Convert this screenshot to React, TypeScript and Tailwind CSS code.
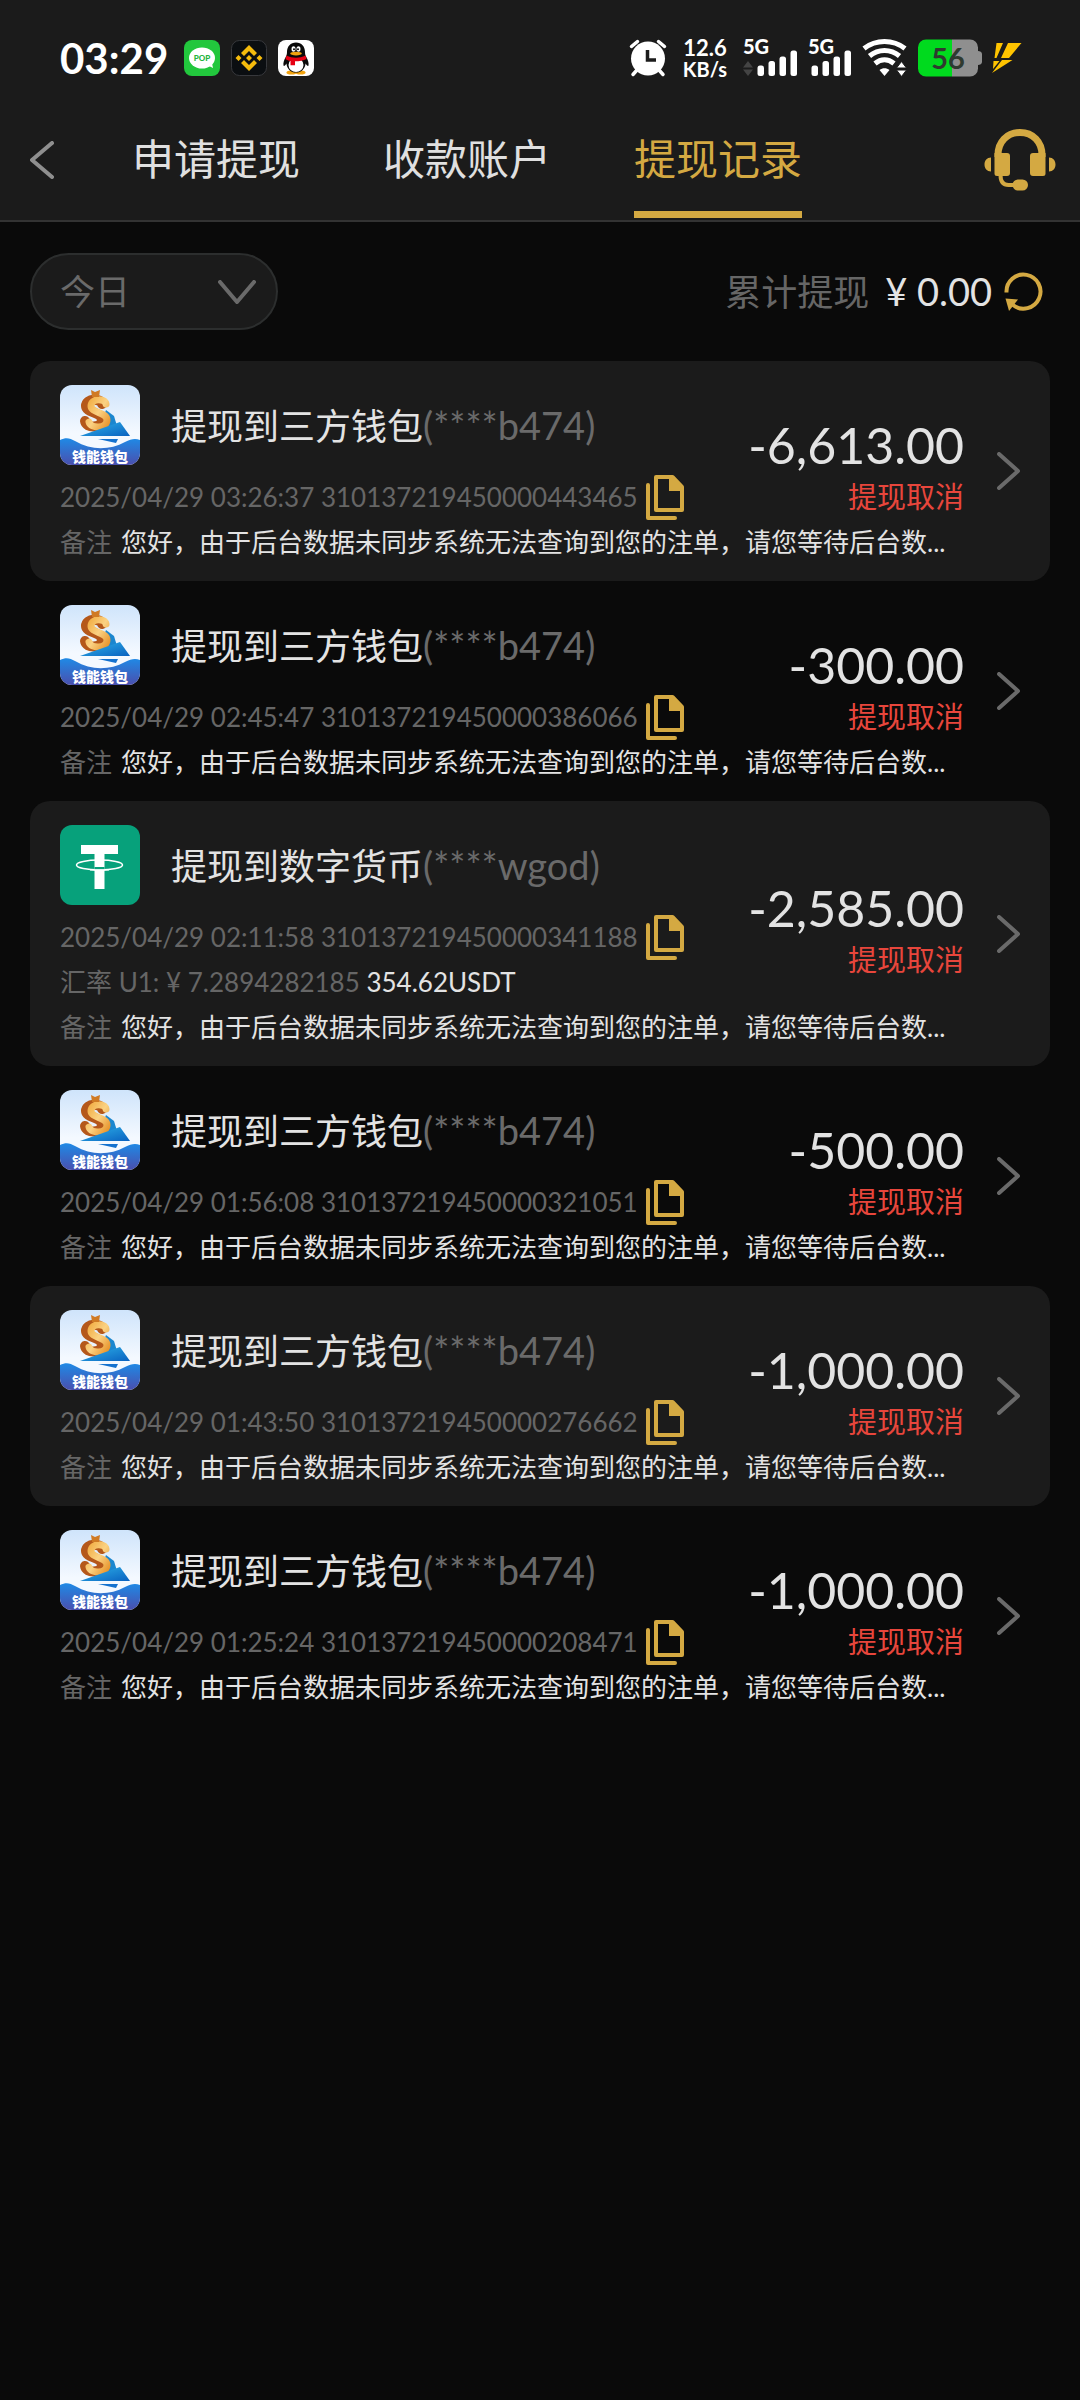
import { ReactNode } from "react";

interface WithdrawRecord {
  kind: "wallet" | "usdt";
  title: string;
  account: string;
  time: string;
  orderNo: string;
  rate?: string;
  received?: string;
  amount: string;
}

const remark =
  "您好，由于后台数据未同步系统无法查询到您的注单，请您等待后台数...";

const records: WithdrawRecord[] = [
  {
    kind: "wallet",
    title: "提现到三方钱包",
    account: "(****b474)",
    time: "2025/04/29 03:26:37",
    orderNo: "310137219450000443465",
    amount: "-6,613.00",
  },
  {
    kind: "wallet",
    title: "提现到三方钱包",
    account: "(****b474)",
    time: "2025/04/29 02:45:47",
    orderNo: "310137219450000386066",
    amount: "-300.00",
  },
  {
    kind: "usdt",
    title: "提现到数字货币",
    account: "(****wgod)",
    time: "2025/04/29 02:11:58",
    orderNo: "310137219450000341188",
    rate: "7.2894282185",
    received: "354.62USDT",
    amount: "-2,585.00",
  },
  {
    kind: "wallet",
    title: "提现到三方钱包",
    account: "(****b474)",
    time: "2025/04/29 01:56:08",
    orderNo: "310137219450000321051",
    amount: "-500.00",
  },
  {
    kind: "wallet",
    title: "提现到三方钱包",
    account: "(****b474)",
    time: "2025/04/29 01:43:50",
    orderNo: "310137219450000276662",
    amount: "-1,000.00",
  },
  {
    kind: "wallet",
    title: "提现到三方钱包",
    account: "(****b474)",
    time: "2025/04/29 01:25:24",
    orderNo: "310137219450000208471",
    amount: "-1,000.00",
  },
];

const PopIcon = () => (
  <svg width="36" height="36" viewBox="0 0 36 36" aria-hidden="true">
    <rect width="36" height="36" rx="8" fill="#22c73d" />
    <ellipse cx="18" cy="18" rx="13" ry="10.5" fill="#fff" />
    <path d="M23 25l6 3-1.5-7z" fill="#fff" />
    <text
      x="18"
      y="21"
      textAnchor="middle"
      fontSize="8"
      fontWeight="900"
      fill="#22b53d"
    >
      POP
    </text>
  </svg>
);

const BinanceIcon = () => (
  <svg width="36" height="36" viewBox="0 0 36 36" aria-hidden="true">
    <rect
      x="0.5"
      y="0.5"
      width="35"
      height="35"
      rx="8"
      fill="#0b0e11"
      stroke="#37383c"
    />
    <g fill="#f5bb0c">
      <path d="M18 5l8 8-3 3-5-5-5 5-3-3z" />
      <path d="M18 31l8-8-3-3-5 5-5-5-3 3z" />
      <path d="M18 15l3 3-3 3-3-3zM7.5 15l3 3-3 3-3-3zM28.5 15l3 3-3 3-3-3z" />
    </g>
  </svg>
);

const PenguinIcon = () => (
  <svg width="36" height="36" viewBox="0 0 36 36" aria-hidden="true">
    <rect width="36" height="36" rx="8" fill="#fff" />
    <ellipse cx="13.5" cy="32.5" rx="5" ry="2" fill="#f2a30f" />
    <ellipse cx="22.5" cy="32.5" rx="5" ry="2" fill="#f2a30f" />
    <path
      d="M18 2.5c-5.5 0-9 4-9 9.5 0 2-.3 3-1.3 5-1.7 3-2.7 6-2.2 8.5.4 1.300 1.900-.3 2.900-2.100C9 29 13 32.500 18 32.500s9-3.500 9.600-9.100c1 1.800 2.500 3.400 2.900 2.100.5-2.500-.5-5.500-2.200-8.500-1-2-1.300-3-1.300-5 0-5.500-3.500-9.500-9-9.500z"
      fill="#0a0a0a"
    />
    <ellipse cx="18" cy="25" rx="7.5" ry="7" fill="#fff" />
    <ellipse cx="15.5" cy="9" rx="2" ry="2.8" fill="#fff" />
    <ellipse cx="20.5" cy="9" rx="2" ry="2.8" fill="#fff" />
    <circle cx="16" cy="9.3" r="1" fill="#0a0a0a" />
    <circle cx="20" cy="9.3" r="1" fill="#0a0a0a" />
    <ellipse cx="18" cy="13.6" rx="5.8" ry="1.8" fill="#f2a30f" />
    <path
      d="M8.500 15.500c6 3 13 3 19 0l1 3.500c-3 1.700-7 2.300-11.500 2.300v4h-4.500V21c-2-.3-3.500-1-5-2z"
      fill="#e60012"
    />
  </svg>
);

const AlarmIcon = () => (
  <svg width="38" height="38" viewBox="0 0 38 38" aria-hidden="true">
    <g stroke="#fff" strokeWidth="3.5" strokeLinecap="round">
      <path d="M2.5 7.5l6-5M35.5 7.5l-6-5M8 31l-4 4.5M30 31l4 4.5" />
    </g>
    <circle cx="19" cy="19.5" r="17" fill="#fff" />
    <path
      d="M18.5 11v10h8.5"
      fill="none"
      stroke="#1b1b1b"
      strokeWidth="3.5"
    />
  </svg>
);

const SignalIcon = ({ arrows = false }: { arrows?: boolean }) => (
  <svg
    width={arrows ? 55 : 44}
    height="38"
    viewBox={arrows ? "0 0 55 38" : "11 0 44 38"}
    className="overflow-visible"
    aria-hidden="true"
  >
    <text
      x={arrows ? 0 : 11}
      y="15"
      fontSize="20"
      fontWeight="900"
      fill="#fff"
    >
      5G
    </text>
    {arrows && (
      <path d="M0 28.500l5-6.500 5 6.500zM0 30.500l5 6.500 5-6.500z" fill="#444" />
    )}
    <g fill="#fff">
      <rect x="14.5" y="26.5" width="6.5" height="10.5" rx="2.5" />
      <rect x="25.5" y="22" width="6.5" height="15" rx="2.5" />
      <rect x="36.5" y="17.5" width="6.5" height="19.5" rx="2.5" />
      <rect x="47.5" y="11.5" width="6.5" height="25.5" rx="2.5" />
    </g>
  </svg>
);

const WifiIcon = () => (
  <svg width="46" height="38" viewBox="0 0 46 38" aria-hidden="true">
    <g fill="none" stroke="#fff" strokeWidth="5">
      <path d="M2 9.500c12-9.300 29-9.300 41 0" />
      <path d="M7.500 17c9-7.500 21-7.500 30 0" />
      <path d="M13 24.500c6-5 13-5 19 0" />
    </g>
    <path d="M17.500 31c3-2.200 7-2.200 10 0L22.500 37z" fill="#fff" />
    <path
      d="M34.500 29l5-6.500 5 6.500zM34.500 31l5 6.500 5-6.500z"
      fill="#fff"
      stroke="#1b1b1b"
      strokeWidth="1"
    />
  </svg>
);

const BatteryIcon = () => (
  <svg width="64" height="38" viewBox="0 0 64 38" aria-hidden="true">
    <path
      d="M34 0.500h18a8 8 0 0 1 8 8V12c2 0 4 1 4 3v8c0 2-2 3-4 3v3.500a8 8 0 0 1-8 8H34z"
      fill="#8f8f8f"
    />
    <path d="M34 0.500H8a8 8 0 0 0-8 8v21a8 8 0 0 0 8 8h26z" fill="#00da1e" />
    <text
      x="30"
      y="30"
      textAnchor="middle"
      fontSize="29"
      fontWeight="700"
      fill="#2f3a2f"
    >
      56
    </text>
  </svg>
);

const BoltIcon = () => (
  <svg width="30" height="32" viewBox="0 0 30 32" aria-hidden="true">
    <path
      d="M4.500 1h6.500L4.500 16H2.500zM16 1h13.500L17 16H9zM1.500 19h6L1 27zM10 18h10.500L0 31z"
      fill="#ffc400"
    />
  </svg>
);

const HeadsetIcon = () => (
  <svg width="72" height="62" viewBox="0 0 72 62" aria-hidden="true">
    <path
      d="M14 28v-2C14 13 23 3.500 36 3.500S58 13 58 26v2"
      fill="none"
      stroke="#d4a942"
      strokeWidth="7"
    />
    <g fill="#d4a942">
      <path d="M10.500 24H23a3 3 0 0 1 3 3v17a3 3 0 0 1-3 3H13a2.500 2.500 0 0 1-2.500-2.500z" />
      <path d="M61.500 24H49a3 3 0 0 0-3 3v17a3 3 0 0 0 3 3h10a2.500 2.500 0 0 0 2.500-2.500z" />
      <path d="M7 28.500v14c-4 0-6.500-3-6.500-7s2.500-7 6.500-7zM65 28.500v14c4 0 6.500-3 6.500-7s-2.500-7-6.500-7z" />
      <rect x="28.5" y="50.5" width="15.5" height="11" rx="5.5" />
    </g>
    <path
      d="M16.500 46c0 7 3 10 8 10h6"
      fill="none"
      stroke="#d4a942"
      strokeWidth="4"
    />
  </svg>
);

const RefreshIcon = () => (
  <svg width="40" height="40" viewBox="0 0 40 40" aria-hidden="true">
    <path
      d="M2.500 20.500A17 17 0 1 1 9 33"
      fill="none"
      stroke="#d4a942"
      strokeWidth="4"
    />
    <path d="M1.500 26.500l12.500 1L5 39z" fill="#d4a942" />
  </svg>
);

const CopyIcon = () => (
  <svg width="38" height="45" viewBox="0 0 38 45" aria-hidden="true">
    <path
      d="M2 10v33h27"
      fill="none"
      stroke="#d4a942"
      strokeWidth="4"
      strokeLinecap="round"
      strokeLinejoin="round"
    />
    <path
      d="M10 2h16.500L36 12v23H10z"
      fill="none"
      stroke="#d4a942"
      strokeWidth="4"
      strokeLinejoin="round"
    />
    <path d="M23 2h3.500L36 12v4H23z" fill="#d4a942" />
  </svg>
);

const Chevron = ({
  d,
  width,
  height,
  color,
}: {
  d: string;
  width: number;
  height: number;
  color: string;
}) => (
  <svg
    width={width}
    height={height}
    viewBox={`0 0 ${width} ${height}`}
    className="shrink-0"
    aria-hidden="true"
  >
    <path
      d={d}
      fill="none"
      stroke={color}
      strokeWidth="4"
      strokeLinecap="round"
      strokeLinejoin="round"
    />
  </svg>
);

const WalletLogo = () => (
  <svg
    width="80"
    height="80"
    viewBox="0 0 80 80"
    className="shrink-0 rounded-xl"
    aria-hidden="true"
  >
    <defs>
      <linearGradient id="sky" x1="0" y1="0" x2="0" y2="1">
        <stop offset="0" stopColor="#cfe4fb" />
        <stop offset="0.6" stopColor="#f4f9ff" />
      </linearGradient>
      <linearGradient id="sea" x1="0" y1="0" x2="0" y2="1">
        <stop offset="0" stopColor="#1f8ae6" />
        <stop offset="1" stopColor="#4a4fae" />
      </linearGradient>
      <linearGradient id="gold" x1="0" y1="0" x2="1" y2="1">
        <stop offset="0" stopColor="#f2ae45" />
        <stop offset="0.5" stopColor="#fbd283" />
        <stop offset="1" stopColor="#e8962e" />
      </linearGradient>
      <linearGradient id="plane" x1="0" y1="0" x2="1" y2="1">
        <stop offset="0" stopColor="#2fb4ea" />
        <stop offset="1" stopColor="#0a62c0" />
      </linearGradient>
    </defs>
    <rect width="80" height="80" fill="url(#sky)" />
    <path d="M46 25l8 6 3 10-20 8z" fill="#1a86cf" />
    <path
      d="M42 19c-1-6-16-6-16 2 0 7 16 6 16 14 0 8-16 9-17 1"
      fill="none"
      stroke="#b5581a"
      strokeWidth="10"
      strokeLinecap="round"
    />
    <path
      d="M46 19c-1-6-15-6-15 2 0 7 16 6 16 14 0 9-16 9-18 2"
      fill="none"
      stroke="url(#gold)"
      strokeWidth="7"
      strokeLinecap="round"
    />
    <path d="M31 5l4 2 5-2-1 7h-7z" fill="#d07a24" />
    <path d="M20 51l40-14 10 14z" fill="url(#plane)" />
    <path d="M38 54h20l-2 4z" fill="#1472cf" />
    <path
      d="M0 55c6-3 10-2 15 1 17 10 35 9 50 1 6-3 10-4 15-2v25H0z"
      fill="url(#sea)"
    />
    <text
      x="40"
      y="77"
      textAnchor="middle"
      fontSize="14"
      fontWeight="900"
      fill="#fff"
    >
      钱能钱包
    </text>
  </svg>
);

const TetherLogo = () => (
  <svg
    width="80"
    height="80"
    viewBox="0 0 80 80"
    className="shrink-0 rounded-xl"
    aria-hidden="true"
  >
    <rect width="80" height="80" fill="#07a17b" />
    <path d="M21 20h37v9H44.500v35h-10V29H21z" fill="#fff" />
    <ellipse
      cx="39.5"
      cy="40"
      rx="23"
      ry="5"
      fill="none"
      stroke="#fff"
      strokeWidth="1.5"
    />
    <path d="M34.500 42h10v2.500h-10z" fill="#07a17b" />
    <path
      d="M30 44.800c6 .4 13 .4 19 0"
      stroke="#fff"
      strokeWidth="1.5"
      fill="none"
    />
  </svg>
);

const StatusBar = () => (
  <div className="flex h-[116px] items-center justify-between pr-[58px] pl-[60px] text-white">
    <div className="flex items-center">
      <span className="mr-4 text-[42px] leading-none font-bold">03:29</span>
      <div className="flex items-center gap-[11px]">
        <PopIcon />
        <BinanceIcon />
        <PenguinIcon />
      </div>
    </div>
    <div className="flex items-center">
      <AlarmIcon />
      <div className="mr-4 ml-4 flex flex-col text-center font-bold">
        <span className="text-[22px] leading-none">12.6</span>
        <span className="text-[20px] leading-none">KB/s</span>
      </div>
      <div className="flex items-center gap-[10px]">
        <SignalIcon arrows />
        <SignalIcon />
        <WifiIcon />
        <BatteryIcon />
        <BoltIcon />
      </div>
    </div>
  </div>
);

const Tab = ({ children, active }: { children: ReactNode; active?: boolean }) => (
  <button
    role="tab"
    aria-selected={!!active}
    className={`border-b-[7px] pb-2 text-[42px] leading-[87px] ${
      active
        ? "border-[#d4a942] text-[#d4a942]"
        : "border-transparent text-[#e0e0e0]"
    }`}
  >
    {children}
  </button>
);

const RecordCard = ({
  record,
  filled,
}: {
  record: WithdrawRecord;
  filled: boolean;
}) => (
  <li
    className={`grid grid-cols-[minmax(0,1fr)_auto_auto] rounded-[20px] px-[30px] py-4 ${
      filled ? "bg-[#1b1b1b]" : ""
    }`}
  >
    <div className="col-start-1 row-start-1 mb-[10px] flex items-center gap-[31px] pt-2">
      {record.kind === "usdt" ? <TetherLogo /> : <WalletLogo />}
      <h2 className="text-[36px] whitespace-nowrap text-[#e3e3e3]">
        {record.title}
        <span className="text-[38px] text-[#6a6a6a]">{record.account}</span>
      </h2>
    </div>
    <div className="col-start-1 row-start-2 flex h-[45px] items-center gap-2 text-[26px] whitespace-nowrap text-[#666]">
      <span>
        {record.time} {record.orderNo}
      </span>
      <button aria-label="复制">
        <CopyIcon />
      </button>
    </div>
    {record.rate && (
      <p className="col-start-1 row-start-3 text-[26px] leading-[45px] whitespace-nowrap text-[#666]">
        汇率 U1: ¥ {record.rate}{" "}
        <span className="text-[#e3e3e3]">{record.received}</span>
      </p>
    )}
    <p className="col-span-2 col-start-1 row-start-4 flex gap-[9px] text-[26px] leading-[45px] whitespace-nowrap text-[#666]">
      备注 <span className="text-[#e3e3e3]">{remark}</span>
    </p>
    <div className="col-start-2 row-span-4 row-start-1 self-center text-right">
      <p className="text-[50px] leading-[52px] text-[#e3e3e3]">
        {record.amount}
      </p>
      <p className="text-[29px] leading-[52px] text-[#e8463c]">提现取消</p>
    </div>
    <button
      aria-label="详情"
      className="col-start-3 row-span-4 row-start-1 ml-[33px] self-center"
    >
      <Chevron d="M2 2l19 17L2 36" width={23} height={38} color="#6a6a6a" />
    </button>
  </li>
);

const App = () => {
  return (
    <div className="min-h-screen bg-[#0a0a0a] font-['Lato','Noto_Sans_CJK_SC',sans-serif]">
      <header className="border-b-2 border-[#333] bg-[#1b1b1b] pb-[2px]">
        <StatusBar />
        <nav className="flex items-center justify-between pr-6 pl-[30px]">
          <div className="flex items-center">
            <button aria-label="返回" className="pb-[14px]">
              <Chevron
                d="M22 2L2 19l20 17"
                width={24}
                height={38}
                color="#8f8f8f"
              />
            </button>
            <div role="tablist" className="ml-[78px] flex gap-[83px]">
              <Tab>申请提现</Tab>
              <Tab>收款账户</Tab>
              <Tab active>提现记录</Tab>
            </div>
          </div>
          <button aria-label="客服" className="pb-[14px]">
            <HeadsetIcon />
          </button>
        </nav>
      </header>

      <main className="px-[30px]">
        <div className="flex items-center justify-between py-[31px] pr-[6px]">
          <div className="grid items-center">
            <select
              aria-label="日期"
              className="col-start-1 row-start-1 h-[77px] w-[248px] appearance-none rounded-full border-2 border-[#2c2e2e] bg-[#1b1b1b] pl-7 text-[35px] text-[#6a6a6a]"
            >
              <option>今日</option>
            </select>
            <span className="pointer-events-none col-start-1 row-start-1 mr-[22px] justify-self-end">
              <Chevron
                d="M2 2l17 20L36 2"
                width={38}
                height={24}
                color="#6a6a6a"
              />
            </span>
          </div>
          <div className="flex items-center text-[36px]">
            <span className="mr-4 text-[#666]">累计提现</span>
            <span className="mr-3 text-[38px] text-[#e3e3e3]">¥ 0.00</span>
            <button aria-label="刷新">
              <RefreshIcon />
            </button>
          </div>
        </div>

        <ul>
          {records.map((record, index) => (
            <RecordCard
              key={record.orderNo}
              record={record}
              filled={index % 2 === 0}
            />
          ))}
        </ul>
      </main>
    </div>
  );
};

export default App;
